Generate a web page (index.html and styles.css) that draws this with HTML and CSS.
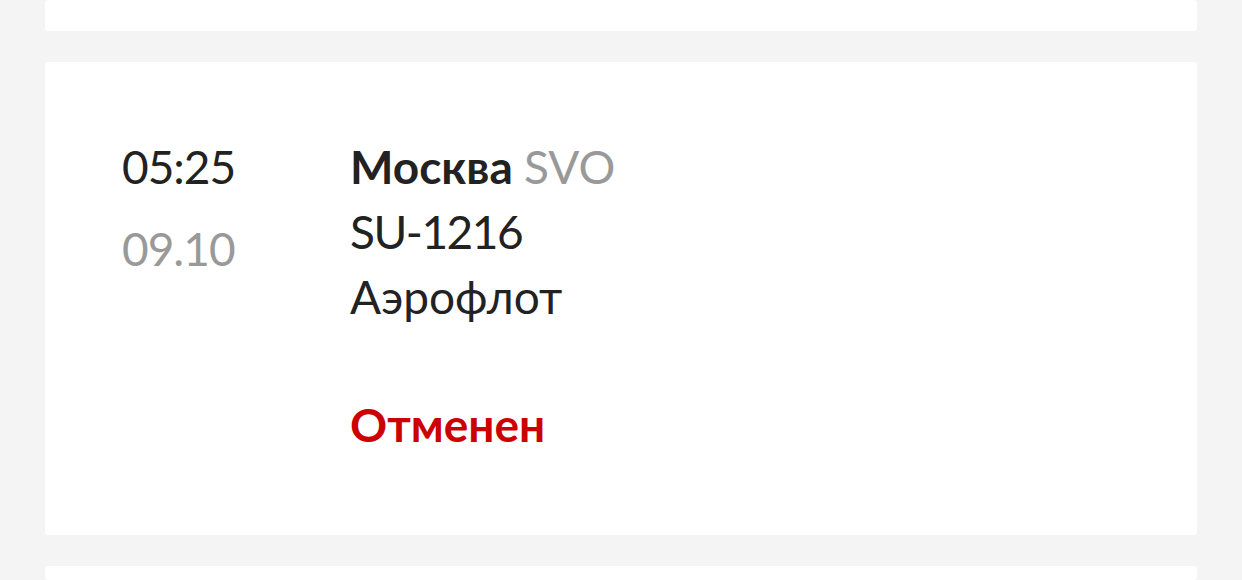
FILE: index.html
```html
<!DOCTYPE html>
<html lang="ru">
<head>
<meta charset="utf-8">
<title>Рейсы</title>
<link rel="stylesheet" href="styles.css">
</head>
<body>
<main class="flights">
  <section class="card card--tail"></section>
  <section class="card flight">
    <div class="flight__when">
      <div class="flight__time">05:25</div>
      <div class="flight__date">09.10</div>
    </div>
    <div class="flight__info">
      <div class="flight__city">Москва <span class="flight__code">SVO</span></div>
      <div class="flight__number">SU-1216</div>
      <div class="flight__airline">Аэрофлот</div>
      <div class="flight__status flight__status--cancelled">Отменен</div>
    </div>
  </section>
  <section class="card card--tail card--next"></section>
</main>
</body>
</html>
```
FILE: styles.css
```css
html, body {
  margin: 0;
  padding: 0;
  background: #f4f4f4;
}

body {
  font-family: Lato, "Noto Sans", sans-serif;
  color: #222222;
}

.flights {
  display: flex;
  flex-direction: column;
  gap: 31px;
  padding: 0 45px;
}

.card {
  background: #ffffff;
  border-radius: 3px;
}

.card--tail {
  height: 31px;
  flex: none;
}

.card--next {
  height: 14px;
}

.flight {
  display: flex;
  padding: 72px 77px 0;
  height: 473px;
  box-sizing: border-box;
}

.flight__when {
  width: 228px;
  flex: none;
  font-size: 46px;
  line-height: 65px;
}

.flight__time {
  letter-spacing: -1px;
}

.flight__date {
  color: #999999;
  margin-top: 17px;
  letter-spacing: -1px;
}

.flight__info {
  font-size: 46px;
  line-height: 65px;
}

.flight__city {
  font-weight: 700;
}

.flight__code {
  font-weight: 400;
  color: #999999;
}

.flight__number {
  letter-spacing: -1.5px;
}

.flight__status {
  margin-top: 63px;
  font-weight: 700;
}

.flight__status--cancelled {
  color: #cc0000;
}
```
